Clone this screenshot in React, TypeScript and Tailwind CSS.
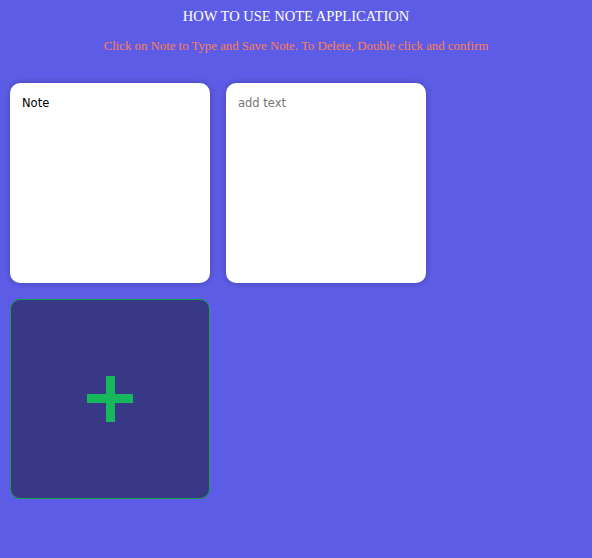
import { useState } from 'react'

export default function App() {
  const [notes, setNotes] = useState<string[]>(['Note', ''])

  return (
    <div className="min-h-screen bg-[#5d5ce6] font-['Liberation_Serif',serif]">
      {/* Header */}
      <div className="pt-[7px] text-center">
        <h1 className="text-[14.5px] leading-[18px] text-white">HOW TO USE NOTE APPLICATION</h1>
        <p className="mt-[13px] text-[12.8px] leading-[16px] text-[#ff7f50]">
          Click on Note to Type and Save Note. To Delete, Double click and confirm
        </p>
      </div>

      {/* Notes grid */}
      <div className="mt-[29px] flex flex-wrap gap-4 px-[10px]">
        {notes.map((note, index) => (
          <textarea
            key={index}
            value={note}
            placeholder="add text"
            onChange={(e) => {
              const next = [...notes]
              next[index] = e.target.value
              setNotes(next)
            }}
            className="h-[200px] w-[200px] resize-none rounded-[10px] bg-white px-3 py-3 font-['DejaVu_Sans',sans-serif] text-[11.5px] leading-[16px] text-black shadow-[0_0_6px_rgba(0,0,0,0.25)] outline-none placeholder:text-[#757575]"
          />
        ))}
        <button
          onClick={() => setNotes([...notes, ''])}
          className="flex h-[200px] w-[200px] items-center justify-center rounded-[10px] border border-[#16a34a] bg-[#383886]"
        >
          <svg width="46" height="46" viewBox="0 0 46 46">
            <rect x="19" y="0" width="9" height="46" fill="#15b85a" />
            <rect x="0" y="18" width="46" height="9" fill="#15b85a" />
          </svg>
        </button>
      </div>
    </div>
  )
}
